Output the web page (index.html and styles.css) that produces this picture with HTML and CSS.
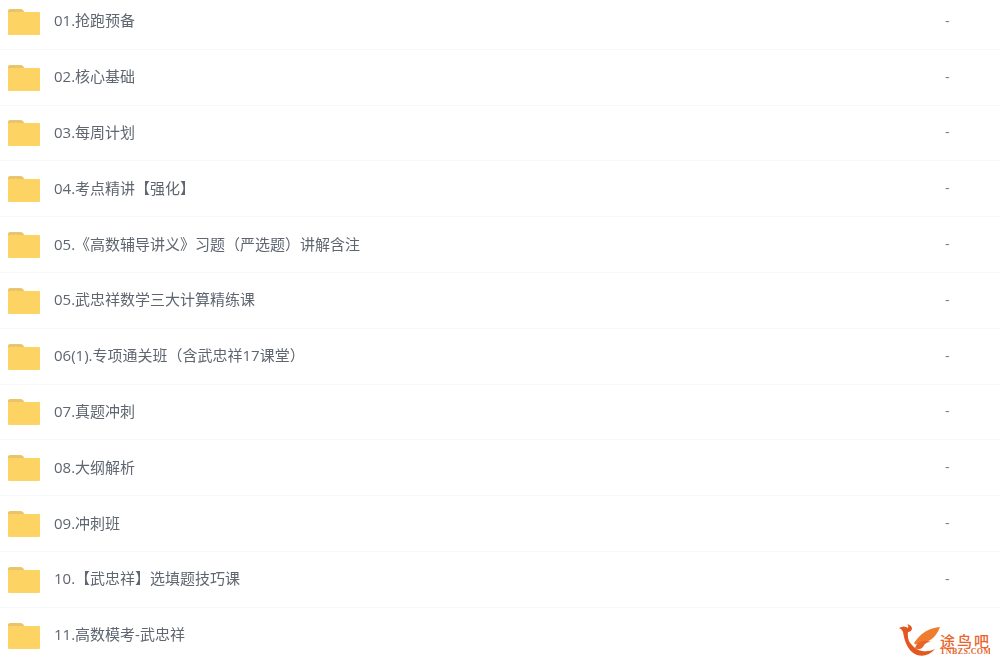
FILE: index.html
```html
<!DOCTYPE html>
<html lang="zh">
<head>
    <meta charset="UTF-8">
    <title>文件列表</title>
    <link rel="stylesheet" href="styles.css">
</head>
<body>
    <svg class="defs" width="0" height="0">
        <symbol id="folder" viewBox="0 0 32 26">
            <path d="M0 2q0-2 2-2h10q2 0 3 1l2 3H0z" fill="#e8c56c"/>
            <path d="M0 4q0-1 1-1h30q1 0 1 1v21q0 1-1 1H1q-1 0-1-1z" fill="#fdd364"/>
        </symbol>
    </svg>

    <div class="list">
        <div class="row"><svg class="icon"><use href="#folder"/></svg><span class="name">01.抢跑预备</span><span class="size">-</span></div>
        <div class="row"><svg class="icon"><use href="#folder"/></svg><span class="name">02.核心基础</span><span class="size">-</span></div>
        <div class="row"><svg class="icon"><use href="#folder"/></svg><span class="name">03.每周计划</span><span class="size">-</span></div>
        <div class="row"><svg class="icon"><use href="#folder"/></svg><span class="name">04.考点精讲【强化】</span><span class="size">-</span></div>
        <div class="row"><svg class="icon"><use href="#folder"/></svg><span class="name">05.《高数辅导讲义》习题（严选题）讲解含注</span><span class="size">-</span></div>
        <div class="row"><svg class="icon"><use href="#folder"/></svg><span class="name">05.武忠祥数学三大计算精练课</span><span class="size">-</span></div>
        <div class="row"><svg class="icon"><use href="#folder"/></svg><span class="name">06(1).专项通关班（含武忠祥17课堂）</span><span class="size">-</span></div>
        <div class="row"><svg class="icon"><use href="#folder"/></svg><span class="name">07.真题冲刺</span><span class="size">-</span></div>
        <div class="row"><svg class="icon"><use href="#folder"/></svg><span class="name">08.大纲解析</span><span class="size">-</span></div>
        <div class="row"><svg class="icon"><use href="#folder"/></svg><span class="name">09.冲刺班</span><span class="size">-</span></div>
        <div class="row"><svg class="icon"><use href="#folder"/></svg><span class="name">10.【武忠祥】选填题技巧课</span><span class="size">-</span></div>
        <div class="row"><svg class="icon"><use href="#folder"/></svg><span class="name">11.高数模考-武忠祥</span><span class="size"></span></div>
    </div>

    <!-- 水印 -->
    <svg class="mark" viewBox="0 0 92 34">
        <path d="M1 5Q6 2 10 5Q11 2 9 1Q14 2 14 6Q13 9 10 9Q9 18 14 22Q18 27 24 28Q31 29 37 26Q29 35 19 32Q8 28 5 9Q4 6 1 5z" fill="#e2581f"/>
        <path d="M42 4Q26 5 16 20Q18 23 21 20Q36 20 42 4z" fill="#ee7d2f"/>
        <path d="M17 25Q21 15 33 19Q27 19 25 24Q21 28 17 25z" fill="#e8652a"/>
        <text class="mark-cn" x="42" y="24">途鸟吧</text>
        <text class="mark-en" x="42" y="31">TNBZS.COM</text>
    </svg>
</body>
</html>
```

FILE: styles.css
```css
html, body {
    height: 100%;
    overflow: hidden;
}
body {
    margin: 0;
    background: #fff;
    font-family: "Open Sans", "Noto Sans CJK SC", sans-serif;
    font-size: 15px;
    color: #5f6670;
}
.defs {
    display: block;
    height: 0;
}
.list {
    margin-top: -6px;
}
.row {
    display: flex;
    align-items: center;
    height: 55.8px;
    box-sizing: border-box;
    padding-left: 8px;
    border-bottom: 1px solid #f8f8f8;
}
.icon {
    width: 32px;
    height: 26px;
    margin-top: 1px;
    flex: none;
}
.name {
    margin: 0 0 3px 14px;
    flex: 1;
    white-space: nowrap;
    filter: blur(0.3px);
}
.size {
    width: 55px;
    margin-bottom: 2px;
    flex: none;
    font-size: 14px;
    color: #7a8088;
}
.mark {
    position: absolute;
    right: 10px;
    bottom: 3px;
    width: 92px;
    height: 34px;
}
.mark-cn {
    font-family: "Noto Sans CJK SC", sans-serif;
    font-size: 15px;
    font-weight: 500;
    letter-spacing: 2px;
    fill: #e8642a;
}
.mark-en {
    font-family: "Liberation Serif", serif;
    font-size: 8px;
    font-weight: bold;
    letter-spacing: 0.4px;
    fill: #e8642a;
}
```
